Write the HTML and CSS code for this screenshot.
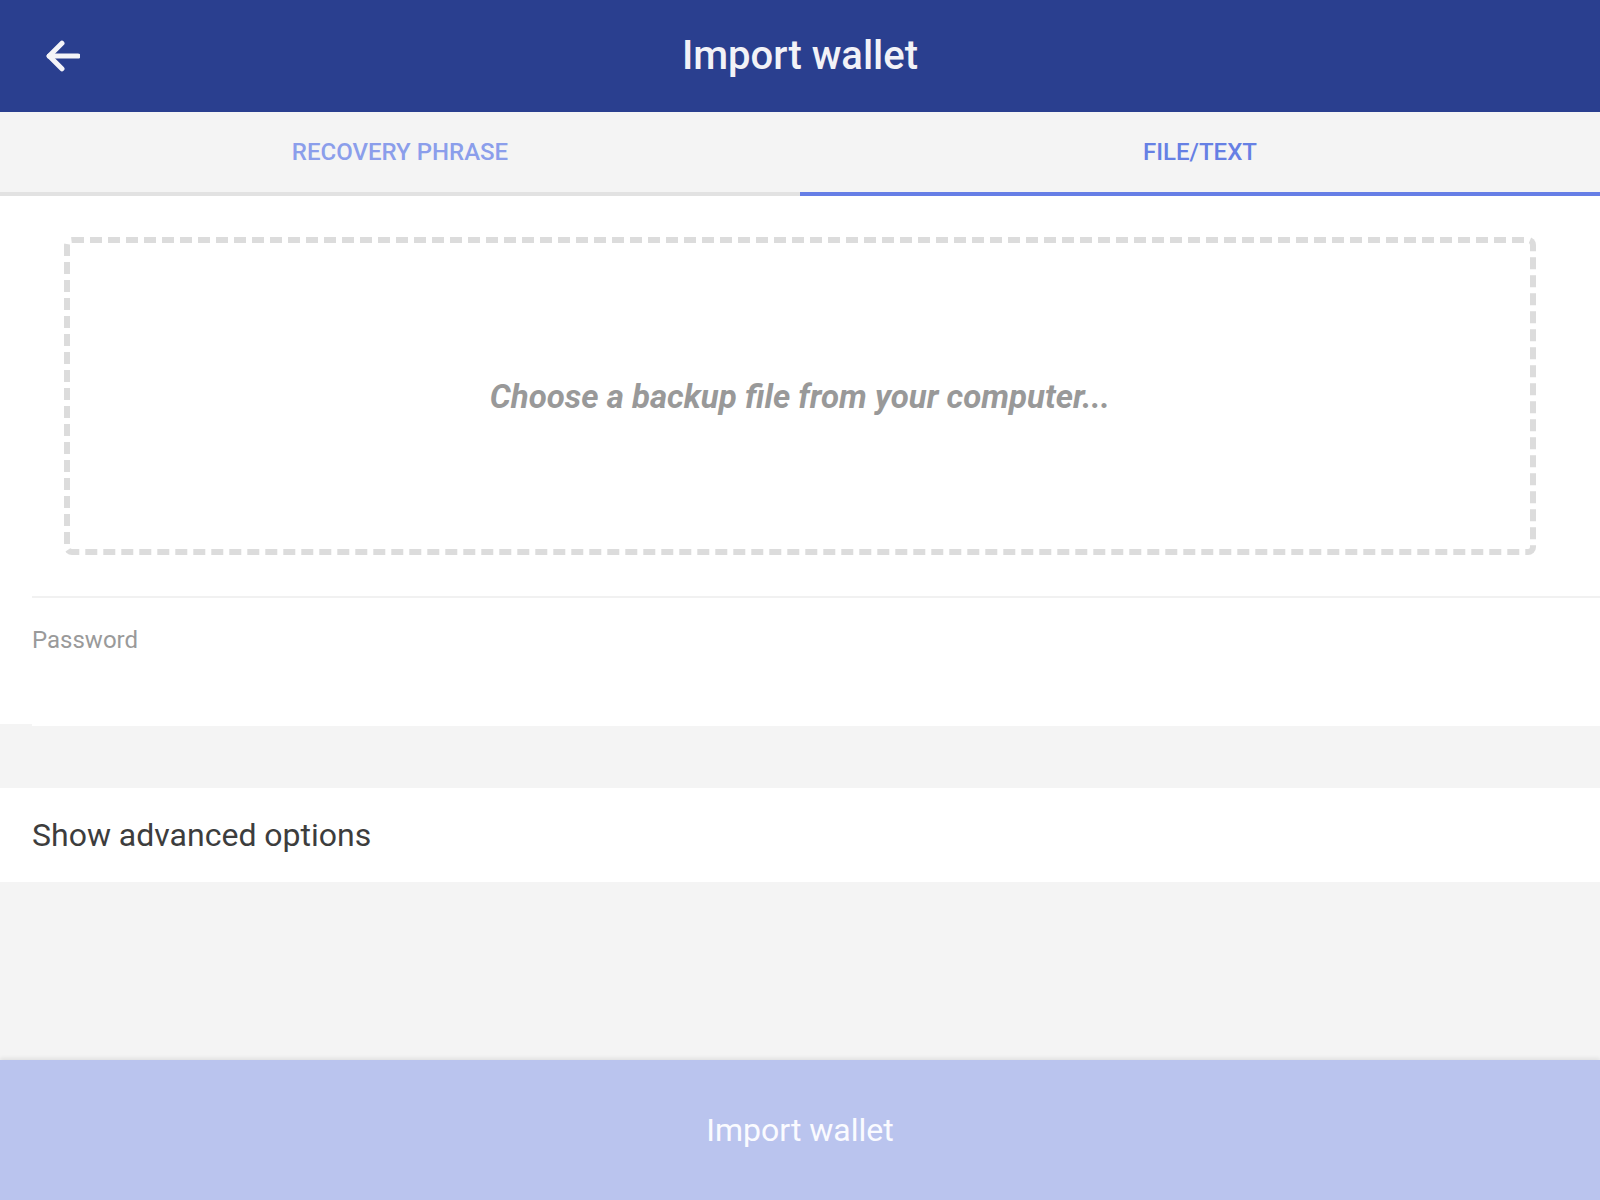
FILE: index.html
```html
<!DOCTYPE html>
<html lang="en">
<head>
<meta charset="utf-8">
<title>Import wallet</title>
<link rel="stylesheet" href="styles.css">
</head>
<body>
<div class="app">
  <header class="topbar">
    <button class="back" aria-label="Back">
      <svg viewBox="4 4 16 16" width="34" height="34" fill="none" stroke="currentColor" stroke-width="2.4" stroke-linecap="round" stroke-linejoin="round">
        <line x1="19" y1="12" x2="5.5" y2="12"></line>
        <polyline points="11.5 18 5.5 12 11.5 6"></polyline>
      </svg>
    </button>
    <h1 class="title">Import wallet</h1>
  </header>
  <nav class="tabs">
    <div class="tab">RECOVERY PHRASE</div>
    <div class="tab active">FILE/TEXT</div>
  </nav>
  <main class="content">
    <section class="upload">
      <div class="dropzone">
        <span class="drop-text">Choose a backup file from your computer...</span>
      </div>
    </section>
    <section class="field">
      <label class="field-label">Password</label>
    </section>
    <div class="gap"></div>
    <section class="advanced">
      <span>Show advanced options</span>
    </section>
    <div class="filler"></div>
  </main>
  <button class="import-btn">Import wallet</button>
</div>
</body>
</html>
```

FILE: styles.css
```css
* { box-sizing: border-box; }
html, body { margin: 0; padding: 0; }
body {
  font-family: Roboto, "Liberation Sans", sans-serif;
  background: #f4f4f4;
}
.app {
  display: flex;
  flex-direction: column;
  height: 1200px;
  width: 1600px;
}
.topbar {
  height: 112px;
  background: #2a3f8f;
  display: flex;
  align-items: center;
  justify-content: center;
  position: relative;
  flex: none;
}
.back {
  position: absolute;
  left: 46px;
  top: 39px;
  width: 34px;
  height: 34px;
  padding: 0;
  border: 0;
  background: none;
  color: #f4f4f8;
  display: flex;
}
.title {
  margin: 0;
  font-size: 40px;
  font-weight: 500;
  color: #f2f2f7;
  line-height: 1;
}
.tabs {
  display: flex;
  height: 84px;
  flex: none;
  background: #f4f4f4;
}
.tab {
  flex: 1;
  display: flex;
  align-items: center;
  justify-content: center;
  font-size: 24px;
  font-weight: 500;
  color: #8b9eeb;
  border-bottom: 4px solid #e2e2e2;
}
.tab.active {
  color: #6680e4;
  border-bottom-color: #667ee6;
}
.content {
  flex: 1;
  display: flex;
  flex-direction: column;
}
.upload {
  background: #fff;
  padding: 41px 64px 43px;
  position: relative;
}
.upload::after {
  content: "";
  position: absolute;
  left: 32px;
  right: 0;
  bottom: 0;
  height: 2px;
  background: #f1f1f1;
}
.dropzone {
  height: 318px;
  border: 6px dashed #dcdcdc;
  border-radius: 8px;
  display: flex;
  align-items: center;
  justify-content: center;
}
.drop-text {
  font-size: 33px;
  font-weight: 700;
  font-style: italic;
  color: #999999;
}
.field {
  background: #fff;
  height: 126px;
  padding: 28px 32px 0;
  position: relative;
}
.field::after {
  content: "";
  position: absolute;
  left: 32px;
  right: 0;
  bottom: -2px;
  height: 2px;
  background: #fff;
}
.field-label {
  font-size: 24px;
  line-height: 28px;
  color: #9a9a9a;
}
.gap {
  height: 62px;
  margin-top: 2px;
}
.advanced {
  background: #fff;
  height: 94px;
  display: flex;
  align-items: center;
  padding: 0 32px;
  font-size: 32px;
  color: #3d3d3d;
}
.filler { flex: 1; }
.import-btn {
  flex: none;
  height: 140px;
  border: 0;
  margin: 0;
  background: #bac4ee;
  color: #fafbff;
  font-family: Roboto, "Liberation Sans", sans-serif;
  font-size: 32px;
  font-weight: 400;
  box-shadow: 0 -2px 4px rgba(0,0,0,0.08);
  position: relative;
}
```
